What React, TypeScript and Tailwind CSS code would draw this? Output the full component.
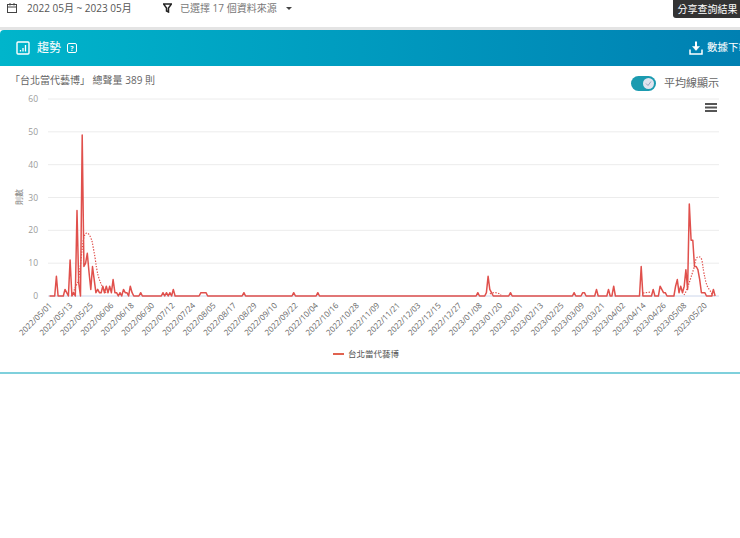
import React from "react";

const FONT = '"Open Sans", "Noto Sans CJK TC", sans-serif';

const peaks: Record<number, number> = {
  4: 6, 9: 2, 10: 1, 12: 11, 14: 1, 16: 26, 17: 4, 19: 49, 20: 9, 21: 10, 22: 13, 23: 7, 24: 2, 25: 9, 26: 5, 27: 1, 28: 2, 29: 1, 30: 1, 31: 3, 32: 1, 33: 3, 34: 1, 35: 3, 36: 1, 37: 5, 38: 1, 39: 1, 41: 1, 43: 2, 44: 1, 45: 1, 47: 3, 48: 1, 53: 1,
  66: 1, 68: 1, 70: 1, 72: 2, 88: 1, 89: 1, 90: 1, 91: 1, 113: 1, 142: 1, 156: 1,
  249: 1, 254: 1, 255: 6, 256: 2, 257: 1, 268: 1, 305: 1, 310: 1, 311: 1, 318: 2, 325: 2, 328: 3, 344: 9, 351: 2, 355: 3, 356: 2, 357: 1, 358: 1, 364: 3, 365: 5, 366: 1, 367: 3, 368: 1, 369: 3, 370: 8, 371: 2, 372: 28, 373: 17, 374: 17, 375: 9, 376: 9, 377: 8, 378: 5, 379: 1, 380: 1, 381: 1, 382: 0, 385: 0, 386: 2,
};
const DAYS = 388;
const values = Array.from({ length: DAYS }, (_, i) => peaks[i] ?? 0);
const X = (d: number) => 49.5 + d * 1.72;
const Y = (v: number) => 296 - v * 3.283;
const linePts = values.map((v, i) => `${X(i).toFixed(1)},${Y(v).toFixed(1)}`).join(" ");

const avgSegments = [
  "M72 296C74 290 76 286 78 282C80 272 81 258 83 242C84 236 85 233 87 233C89 233 91 238 92 241C93 246 94 252 95 257C96 265 97 271 98 275C100 282 102 287 106 293",
  "M490 294C492 292 498 292 501 295",
  "M643 293L651 292",
  "M684 295C687 291 690 280 694 268C695 262 696 257 698 257C700 256 701 258 702 260C703 268 704 274 705 278C706 284 708 288 709 289C711 292 712 294 713 296",
];

const dates = [
  "2022/05/01", "2022/05/13", "2022/05/25", "2022/06/06", "2022/06/18", "2022/06/30", "2022/07/12", "2022/07/24", "2022/08/05", "2022/08/17", "2022/08/29", "2022/09/10", "2022/09/22", "2022/10/04", "2022/10/16", "2022/10/28", "2022/11/09", "2022/11/21", "2022/12/03", "2022/12/15", "2022/12/27", "2023/01/08", "2023/01/20", "2023/02/01", "2023/02/13", "2023/02/25", "2023/03/09", "2023/03/21", "2023/04/02", "2023/04/14", "2023/04/26", "2023/05/08", "2023/05/20",
];

function Chart() {
  return (
    <svg width="740" height="306" viewBox="0 66 740 306" className="block" style={{ fontFamily: FONT }}>
      {[0, 10, 20, 30, 40, 50, 60].map((v) => (
        <g key={v}>
          <line x1="48" x2="719" y1={Y(v)} y2={Y(v)} stroke={v === 0 ? "#ccd6eb" : "#ececec"} strokeWidth="1" />
          <text x="38" y={Y(v) + 3} textAnchor="end" fontSize="8.5" fill="#9a9a9a">{v}</text>
        </g>
      ))}
      <text transform="translate(22 197) rotate(-90)" textAnchor="middle" fontSize="8" fill="#777">則數</text>
      {dates.map((d, i) => (
        <text key={d} transform={`translate(${52.5 + i * 20.47} 306) rotate(-45)`} textAnchor="end" fontSize="8" fill="#666">{d}</text>
      ))}
      {avgSegments.map((d) => (
        <path key={d} d={d} fill="none" stroke="#e0504c" strokeWidth="1.2" strokeDasharray="1.4 1.4" />
      ))}
      <polyline points={linePts} fill="none" stroke="#e0504c" strokeWidth="1.5" strokeLinejoin="round" />
      <line x1="333" x2="344" y1="354" y2="354" stroke="#e0624f" strokeWidth="2" />
      <text x="348" y="357" fontSize="8.5" fill="#555">台北當代藝博</text>
      <g fill="#555">
        <rect x="705" y="103" width="12" height="2" />
        <rect x="705" y="106.500" width="12" height="2" />
        <rect x="705" y="110" width="12" height="2" />
      </g>
    </svg>
  );
}

export default function App() {
  return (
    <div className="relative h-[538px] w-[740px] overflow-hidden bg-white" style={{ fontFamily: FONT }}>
      <div className="flex h-[27px] items-center whitespace-nowrap pb-[11px] text-[10px] text-[#666]">
        <svg width="12" height="12" viewBox="0 0 12 12" fill="none" stroke="#444" strokeWidth="1" className="ml-[6px]">
          <rect x="1.500" y="2.500" width="9" height="8" />
          <path d="M1.500 5h9M4 1v2.500M8 1v2.500" />
        </svg>
        <span className="ml-[9px] w-[118px] text-[#555]">2022 05月 ~ 2023 05月</span>
        <svg width="9" height="10" viewBox="0 0 9 10" className="ml-[18px]">
          <path d="M0.500 1h8L5.500 5v4L3.500 8V5z" fill="none" stroke="#222" strokeWidth="1.500" />
        </svg>
        <span className="ml-[8px] w-[106px] text-[10px] text-[#777]">已選擇 17 個資料來源</span>
        <span className="h-0 w-0 border-x-[3.5px] border-t-[3.5px] border-x-transparent border-t-[#444]" />
      </div>
      <div className="h-[3px] bg-[#e4e4e4]" />
      <div className="w-[740px] border-b-2 border-[#7fd0dc]">
        <div className="flex h-[36px] items-center rounded-tl-[4px] bg-gradient-to-r from-[#00b5cb] to-[#0080b2] text-white">
          <svg width="14" height="14" viewBox="0 0 14 14" fill="none" stroke="#fff" className="ml-[16px]">
            <rect x="1" y="1" width="12" height="12" rx="1" strokeWidth="1.400" />
            <path d="M4.500 10.500V9M7 10.500V7M9.500 10.500V4" strokeWidth="1.300" />
          </svg>
          <span className="ml-[7px] text-[12px]">趨勢</span>
          <span className="ml-[6px] flex h-[10px] w-[10px] items-center justify-center rounded-[2px] border border-white text-[7px] font-bold leading-none">?</span>
          <div className="ml-auto flex items-center">
            <svg width="14" height="14" viewBox="0 0 14 14" fill="none" stroke="#fff">
              <path d="M7 0.500v8" strokeWidth="2" />
              <path d="M3.500 5.500h7L7 9.500z" fill="#fff" strokeWidth="0.500" />
              <path d="M1 8.500v4.500h12V8.500" strokeWidth="1.500" />
            </svg>
            <span className="ml-[4px] w-[33px] overflow-hidden whitespace-nowrap text-[10.5px]">數據下載</span>
          </div>
        </div>
        <div className="relative h-[306px]">
          <Chart />
          <div className="absolute left-[10px] top-[7px] text-[10px] text-[#666]">「台北當代藝博」 總聲量 389 則</div>
          <div className="absolute left-[631px] top-[9px] flex items-center">
            <span className="relative h-[15px] w-[25px] rounded-full bg-[#1b9bb0]">
              <span className="absolute right-[2px] top-[2px] flex h-[11px] w-[11px] items-center justify-center rounded-full bg-[#dfe3ee]">
                <svg width="7" height="7" viewBox="0 0 7 7" fill="none" stroke="#9aa5bd" strokeWidth="1">
                  <path d="M1 3.500 3 5.500 6 1.500" />
                </svg>
              </span>
            </span>
            <span className="ml-[8px] text-[11px] text-[#666]">平均線顯示</span>
          </div>
        </div>
      </div>
      <div className="absolute right-0 top-0 flex h-[18px] w-[67px] items-center justify-center rounded-bl-[3px] bg-[#333] pl-[2px] text-[10px] text-white">分享查詢結果</div>
    </div>
  );
}
